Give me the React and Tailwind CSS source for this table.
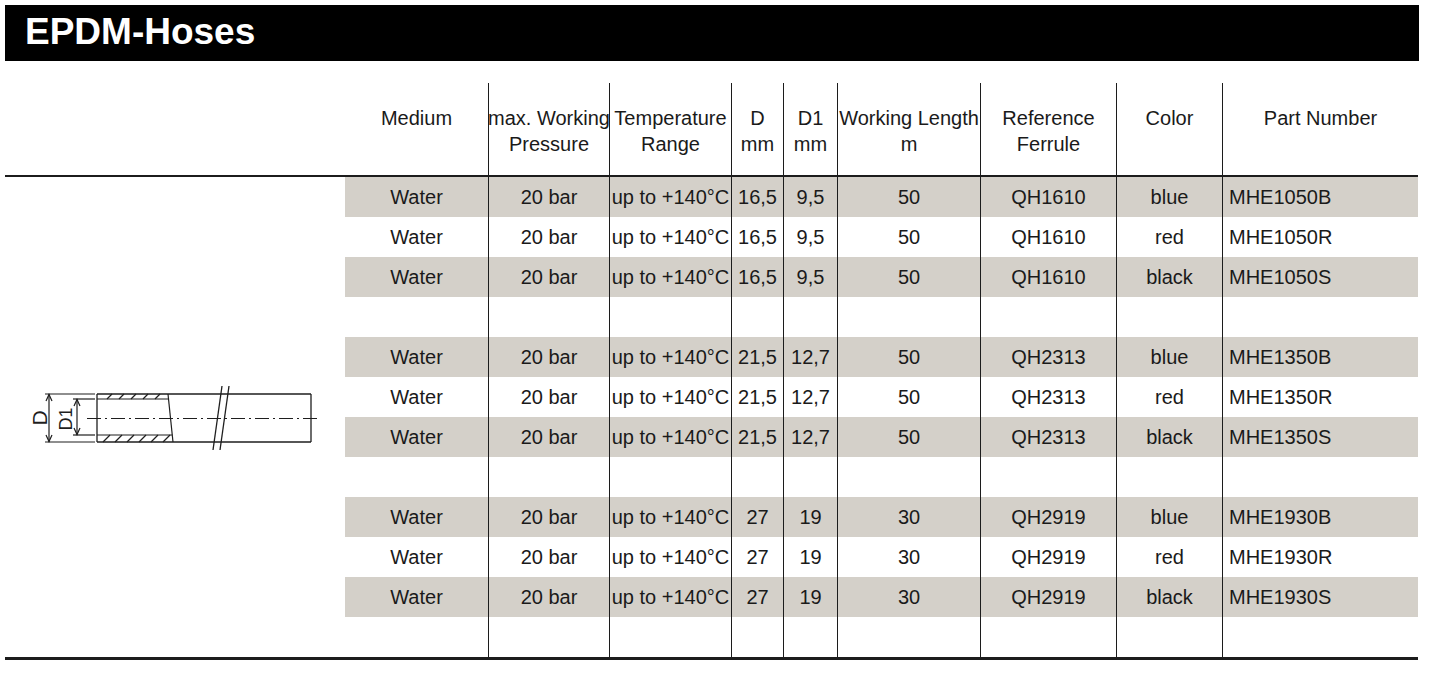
import React from "react";

const headers = [
  ["Medium"],
  ["max. Working", "Pressure"],
  ["Temperature", "Range"],
  ["D", "mm"],
  ["D1", "mm"],
  ["Working Length", "m"],
  ["Reference", "Ferrule"],
  ["Color"],
  ["Part Number"],
];

const groups = [
  { d: "16,5", d1: "9,5", len: "50", ferrule: "QH1610", pn: "MHE1050" },
  { d: "21,5", d1: "12,7", len: "50", ferrule: "QH2313", pn: "MHE1350" },
  { d: "27", d1: "19", len: "30", ferrule: "QH2919", pn: "MHE1930" },
];

const variants = [
  { color: "blue", suffix: "B", gray: true },
  { color: "red", suffix: "R", gray: false },
  { color: "black", suffix: "S", gray: true },
];

const rows = [];
groups.forEach((g) => {
  variants.forEach((v) => {
    rows.push({
      gray: v.gray,
      cells: ["Water", "20 bar", "up to +140°C", g.d, g.d1, g.len, g.ferrule, v.color, g.pn + v.suffix],
    });
  });
  rows.push({ gray: false, cells: ["", "", "", "", "", "", "", "", ""] });
});

function HoseDrawing() {
  const s = "#1e1e1e";
  const topHatch = [82, 94, 106, 118, 130];
  const botHatch = [78, 90, 102, 114, 126, 138];
  return (
    <svg width="300" height="80" viewBox="0 0 300 80" fill="none">
      {/* D dimension */}
      <line x1="20" y1="16" x2="70" y2="16" stroke={s} strokeWidth="1.2" />
      <line x1="20" y1="64" x2="70" y2="64" stroke={s} strokeWidth="1.2" />
      <line x1="24" y1="16" x2="24" y2="64" stroke={s} strokeWidth="1.2" />
      <polyline points="21,23 24,16.5 27,23" stroke={s} strokeWidth="1.2" />
      <polyline points="21,57 24,63.5 27,57" stroke={s} strokeWidth="1.2" />
      <text x="14" y="40" fontSize="21" fill={s} fontFamily="Liberation Sans, Arial, sans-serif" textAnchor="middle" transform="rotate(-90 14 40)" dominantBaseline="central">D</text>
      {/* D1 dimension */}
      <line x1="48" y1="21" x2="70" y2="21" stroke={s} strokeWidth="1.2" />
      <line x1="48" y1="57" x2="70" y2="57" stroke={s} strokeWidth="1.2" />
      <line x1="52" y1="21" x2="52" y2="57" stroke={s} strokeWidth="1.2" />
      <polyline points="49,28 52,21.5 55,28" stroke={s} strokeWidth="1.2" />
      <polyline points="49,50 52,56.5 55,50" stroke={s} strokeWidth="1.2" />
      <text x="41" y="41" fontSize="18" fill={s} fontFamily="Liberation Sans, Arial, sans-serif" textAnchor="middle" transform="rotate(-90 41 41)" dominantBaseline="central">D1</text>
      {/* hose outline */}
      <line x1="72" y1="16" x2="286" y2="16" stroke={s} strokeWidth="1.3" />
      <line x1="72" y1="64" x2="286" y2="64" stroke={s} strokeWidth="1.3" />
      <line x1="72" y1="16" x2="72" y2="64" stroke={s} strokeWidth="1.3" />
      <line x1="286" y1="16" x2="286" y2="64" stroke={s} strokeWidth="1.3" />
      {/* bore */}
      <line x1="72" y1="21" x2="143.5" y2="21" stroke={s} strokeWidth="1.2" />
      <line x1="72" y1="57" x2="147.3" y2="57" stroke={s} strokeWidth="1.2" />
      {/* cut */}
      <line x1="143" y1="16" x2="148" y2="64" stroke={s} strokeWidth="1.2" />
      {/* hatching */}
      {topHatch.map((x) => (
        <line key={"t" + x} x1={x} y1="21" x2={x + 5} y2="16" stroke={s} strokeWidth="1.2" />
      ))}
      {botHatch.map((x) => (
        <line key={"b" + x} x1={x} y1="64" x2={x + 7} y2="57" stroke={s} strokeWidth="1.2" />
      ))}
      {/* centre line */}
      <line x1="62" y1="40.5" x2="293" y2="40.5" stroke={s} strokeWidth="1" strokeDasharray="14 4 2 4" />
      {/* break marks */}
      <line x1="197" y1="8" x2="188" y2="72" stroke={s} strokeWidth="1.3" />
      <line x1="204" y1="8" x2="195" y2="72" stroke={s} strokeWidth="1.3" />
    </svg>
  );
}

export default function App() {
  return (
    <div className="w-[1429px] h-[679px] bg-white text-[#1a1a1a] font-['Liberation_Sans',Arial,sans-serif] overflow-hidden">
      <div className="ml-[5px] mt-[5px] w-[1414px] h-[56px] bg-black flex items-center pl-[20px]">
        <span className="text-white font-bold text-[37px] leading-none -mt-[3px]">EPDM-Hoses</span>
      </div>

      <div className="ml-[5px] mt-[22px] w-[1413px] border-b-[3px] border-[#1c1c1c]">
        <div className="grid grid-cols-[340px_143px_121px_122px_52px_54px_143px_136px_106px_196px] grid-rows-[94px_repeat(12,40px)] text-[20px]">
          <div className="border-b-2 border-[#1c1c1c]" />
          {headers.map((h, i) => (
            <div
              key={"h" + i}
              className={
                "flex flex-col items-center pt-[22px] leading-[26px] whitespace-nowrap border-b-2 border-[#1c1c1c]" +
                (i > 0 ? " border-l-[1.5px]" : "")
              }
            >
              {h.map((line, j) => (
                <span key={j}>{line}</span>
              ))}
            </div>
          ))}

          <div className="col-start-1 row-start-2 row-span-12 flex items-center pl-[20px] pt-[2px]">
            <HoseDrawing />
          </div>

          {rows.map((r, ri) =>
            r.cells.map((c, ci) => (
              <div
                key={ri + "-" + ci}
                className={
                  "flex items-center whitespace-nowrap border-[#1c1c1c]" +
                  (ci === 8 ? " justify-start pl-[6px]" : " justify-center") +
                  (ci > 0 ? " border-l-[1.5px]" : "") +
                  (r.gray ? " bg-[#d4d0c9]" : "")
                }
              >
                {c}
              </div>
            ))
          )}
        </div>
      </div>
    </div>
  );
}
